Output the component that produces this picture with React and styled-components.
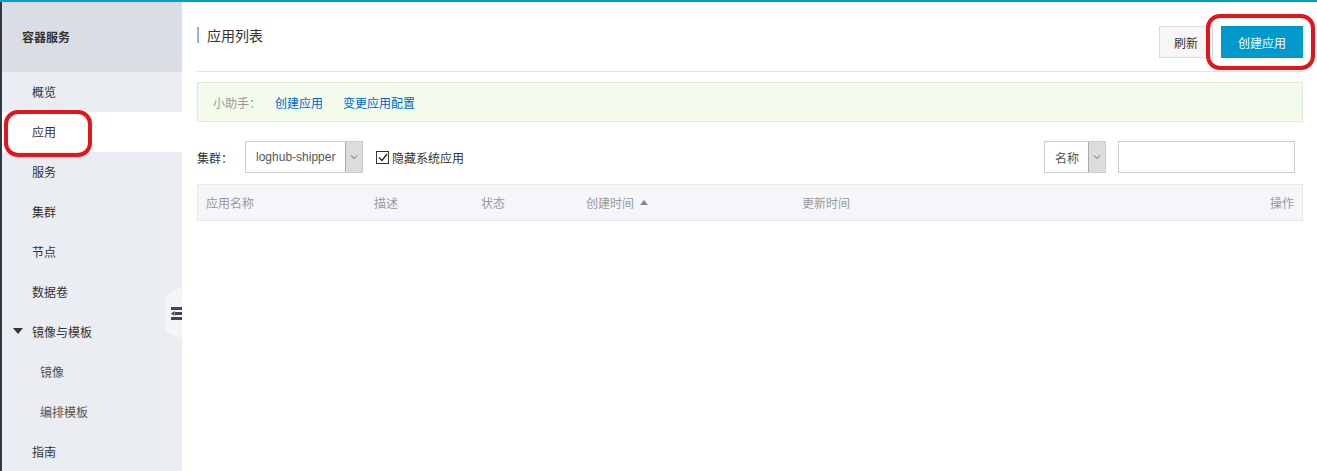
import React from "react";
import styled, { createGlobalStyle } from "styled-components";

const Global = createGlobalStyle`
  * { box-sizing: border-box; margin: 0; padding: 0; }
  html, body { width: 100%; height: 100%; overflow: hidden; }
  body {
    font-family: "Noto Sans CJK SC", "Noto Sans", sans-serif;
    font-size: 12px;
    color: #333;
    background: #fff;
  }
`;

const Page = styled.div`
  position: relative;
  width: 1317px;
  height: 471px;
  border-top: 2px solid #00a2ca;
  display: flex;
`;

const Sidebar = styled.div`
  position: relative;
  width: 182px;
  flex-shrink: 0;
  background: #eaedf1;
  border-left: 2px solid #2d3a45;
  display: flex;
  flex-direction: column;
`;

const SideHead = styled.div`
  height: 70px;
  background: #d9dee4;
  display: flex;
  align-items: center;
  padding-left: 20px;
  font-weight: bold;
  color: #333;
`;

const MenuItem = styled.div`
  height: 40px;
  display: flex;
  align-items: center;
  padding-left: ${(p) => (p.$sub ? 38 : 30)}px;
  background: ${(p) => (p.$active ? "#fff" : "transparent")};
  color: ${(p) => (p.$sub ? "#555" : "#333")};
  position: relative;
`;

const Caret = styled.span`
  position: absolute;
  left: 11px;
  top: 17px;
  width: 0;
  height: 0;
  border-left: 5px solid transparent;
  border-right: 5px solid transparent;
  border-top: 6px solid #333;
`;

const Handle = styled.div`
  position: absolute;
  right: 0;
  top: 285px;
  width: 16px;
  height: 52px;
  background: #f4f5f7;
  clip-path: polygon(100% 0, 100% 100%, 0 85%, 0 15%);
  display: flex;
  align-items: center;
  justify-content: flex-end;
`;

const Main = styled.div`
  flex: 1;
  padding: 0 14px 0 15px;
  display: flex;
  flex-direction: column;
`;

const Header = styled.div`
  height: 70px;
  border-bottom: 1px solid #e1e1e1;
  display: flex;
  justify-content: space-between;
  align-items: flex-start;
`;

const Title = styled.h2`
  margin-top: 25px;
  font-size: 14px;
  font-weight: normal;
  line-height: 16px;
  border-left: 2px solid #88b7e0;
  padding-left: 8px;
  color: #333;
`;

const Buttons = styled.div`
  display: flex;
  gap: 8px;
  margin-top: 24px;
`;

const Button = styled.button`
  height: 32px;
  padding: 0 ${(p) => (p.$primary ? 16 : 14)}px;
  font-family: inherit;
  font-size: 12px;
  border: 1px solid ${(p) => (p.$primary ? "#0099cc" : "#ddd")};
  background: ${(p) => (p.$primary ? "#0099cc" : "#f7f7f7")};
  color: ${(p) => (p.$primary ? "#fff" : "#333")};
`;

const Tip = styled.div`
  margin-top: 10px;
  height: 40px;
  background: #f2fbec;
  border: 1px solid #dcebd2;
  display: flex;
  align-items: center;
  padding-left: 15px;
  color: #999;
`;

const Link = styled.span`
  color: #0066cc;
  margin-left: ${(p) => p.$gap}px;
`;

const Filters = styled.div`
  margin-top: 19px;
  height: 32px;
  display: flex;
  align-items: center;
`;

const Label = styled.span`
  margin-right: 12px;
`;

const Select = styled.div`
  height: 32px;
  width: ${(p) => p.$w}px;
  border: 1px solid #ccc;
  display: flex;
  align-items: stretch;
  background: #fff;
`;

const SelectText = styled.div`
  flex: 1;
  display: flex;
  align-items: center;
  padding-left: 10px;
  color: #555;
  font-family: ${(p) => (p.$latin ? '"Liberation Sans", sans-serif' : "inherit")};
`;

const SelectArrow = styled.div`
  width: 17px;
  background: #dcdcdc;
  border-left: 1px solid #aaa;
  display: flex;
  align-items: center;
  justify-content: center;
`;

const Check = styled.label`
  margin-left: 13px;
  display: flex;
  align-items: center;
  gap: 3px;
`;

const Box = styled.span`
  width: 13px;
  height: 13px;
  border: 1px solid #333;
  display: flex;
  align-items: center;
  justify-content: center;
  background: #fff;
`;

const Spacer = styled.div`
  flex: 1;
`;

const Input = styled.div`
  margin-left: 12px;
  width: 177px;
  height: 32px;
  border: 1px solid #ccc;
  margin-right: 8px;
`;

const Table = styled.div`
  margin-top: 11px;
  height: 37px;
  background: #f5f6fa;
  border: 1px solid #e6e8ee;
  display: flex;
  align-items: center;
  color: #999;
`;

const Col = styled.div`
  width: ${(p) => (p.$w ? `${p.$w}px` : "auto")};
  flex: ${(p) => (p.$w ? "none" : 1)};
  padding-left: ${(p) => (p.$right ? 0 : 8)}px;
  padding-right: ${(p) => (p.$right ? 8 : 0)}px;
  display: flex;
  align-items: center;
  justify-content: ${(p) => (p.$right ? "flex-end" : "flex-start")};
  gap: 6px;
`;

const SortUp = styled.span`
  width: 0;
  height: 0;
  border-left: 4px solid transparent;
  border-right: 4px solid transparent;
  border-bottom: 5px solid #888;
`;

const Mark = styled.div`
  position: absolute;
  border: 4px solid #e3141c;
  border-radius: 14px;
  pointer-events: none;
`;

const menu = [
  { t: "概览" },
  { t: "应用", active: true },
  { t: "服务" },
  { t: "集群" },
  { t: "节点" },
  { t: "数据卷" },
  { t: "镜像与模板", caret: true },
  { t: "镜像", sub: true },
  { t: "编排模板", sub: true },
  { t: "指南" },
];

const Arrow = () => (
  <svg width="8" height="6" viewBox="0 0 8 6">
    <path d="M1 1.5 L4 4.5 L7 1.5" fill="none" stroke="#666" strokeWidth="1" />
  </svg>
);

export default function App() {
  return (
    <>
      <Global />
      <Page>
        <Sidebar>
          <SideHead>容器服务</SideHead>
          {menu.map((m) => (
            <MenuItem key={m.t} $active={m.active} $sub={m.sub}>
              {m.caret && <Caret />}
              {m.t}
            </MenuItem>
          ))}
          <Handle>
            <svg width="11" height="15" viewBox="0 0 11 15">
              <rect x="0" y="1" width="11" height="3" fill="#3f4852" />
              <rect x="4" y="6" width="7" height="3" fill="#3f4852" />
              <path d="M0 7.5 L3.5 5 L3.5 10 Z" fill="#3f4852" />
              <rect x="0" y="11" width="11" height="3" fill="#3f4852" />
            </svg>
          </Handle>
        </Sidebar>
        <Main>
          <Header>
            <Title>应用列表</Title>
            <Buttons>
              <Button>刷新</Button>
              <Button $primary>创建应用</Button>
            </Buttons>
          </Header>
          <Tip>
            <span>小助手：</span>
            <Link $gap={14}>创建应用</Link>
            <Link $gap={20}>变更应用配置</Link>
          </Tip>
          <Filters>
            <Label>集群：</Label>
            <Select $w={118}>
              <SelectText $latin>loghub-shipper</SelectText>
              <SelectArrow>
                <Arrow />
              </SelectArrow>
            </Select>
            <Check>
              <Box>
                <svg width="10" height="9" viewBox="0 0 10 9">
                  <path d="M1 4.5 L4 7.5 L9 1" fill="none" stroke="#222" strokeWidth="1.3" />
                </svg>
              </Box>
              隐藏系统应用
            </Check>
            <Spacer />
            <Select $w={62}>
              <SelectText>名称</SelectText>
              <SelectArrow>
                <Arrow />
              </SelectArrow>
            </Select>
            <Input />
          </Filters>
          <Table>
            <Col $w={168}>应用名称</Col>
            <Col $w={107}>描述</Col>
            <Col $w={105}>状态</Col>
            <Col $w={216}>
              创建时间 <SortUp />
            </Col>
            <Col $w={200}>更新时间</Col>
            <Col $right>操作</Col>
          </Table>
        </Main>
        <Mark style={{ left: 4, top: 108, width: 88, height: 47 }} />
        <Mark style={{ left: 1206, top: 12, width: 109, height: 56 }} />
      </Page>
    </>
  );
}
